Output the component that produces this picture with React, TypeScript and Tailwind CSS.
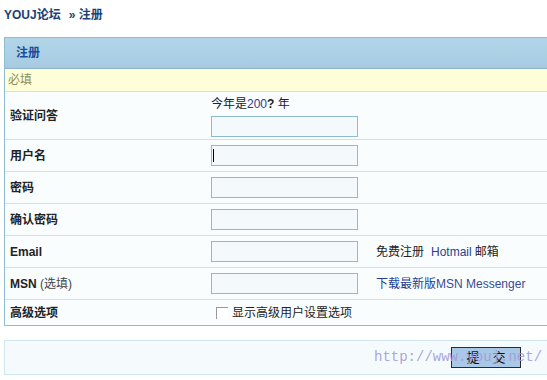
import React from "react"

const font = { fontFamily: '"Liberation Sans", "Noto Sans CJK SC", sans-serif' }

function Field({ caret = false }: { caret?: boolean }) {
  return (
    <div className="relative h-[21px] w-[147px] border border-[#8ebccd] bg-[#f4fafb]">
      {caret && <span className="absolute left-[1px] top-[3px] h-[13px] w-px bg-black" />}
    </div>
  )
}

function Row({
  label,
  children,
  className = "h-[32px]",
}: {
  label: React.ReactNode
  children: React.ReactNode
  className?: string
}) {
  return (
    <div className={`grid grid-cols-[202px_1fr] border-b border-[#c8e3ee] ${className}`}>
      <div className="flex items-center pl-[5px] font-bold text-[#222]">{label}</div>
      <div className="flex items-center pl-[4px]">{children}</div>
    </div>
  )
}

export default function App() {
  return (
    <div className="h-[380px] w-[547px] overflow-hidden bg-white pl-[4px] text-[12px] leading-[14px] text-[#222]" style={font}>
      {/* 面包屑 */}
      <div className="flex h-[30px] items-center font-bold text-[#1c3f78]">
        <span>YOUJ论坛</span>
        <span className="ml-[8px]">» 注册</span>
      </div>

      {/* 注册表单 */}
      <div className="mt-[7px] w-[600px] border-l border-t border-b border-[#8fbcd1] bg-[#fafdfe]">
        <div className="flex h-[31px] items-center border-b border-[#8fb3c6] bg-gradient-to-b from-[#b2d5e8] to-[#a6cbe1] pl-[11px] font-bold text-[#184c9c]">
          注册
        </div>
        <div className="flex h-[23px] items-center border-b border-[#e2e2bf] bg-[#fefed8] pl-[3px] text-[#8b8b5a]">
          必填
        </div>

        <Row label="验证问答" className="h-[48px]">
          <div className="flex flex-col gap-[5px] pt-[2px]">
            <span>
              今年是<span className="text-[#2e3a86]">200</span>
              <span className="font-bold">?</span> 年
            </span>
            <Field />
          </div>
        </Row>
        <Row label="用户名">
          <Field caret />
        </Row>
        <Row label="密码">
          <Field />
        </Row>
        <Row label="确认密码">
          <Field />
        </Row>
        <Row label="Email">
          <Field />
          <span className="ml-[18px]">免费注册</span>
          <span className="ml-[7px] text-[#2c3f8c]">Hotmail</span>
          <span className="ml-[3px]">邮箱</span>
        </Row>
        <Row label={<span>MSN <span className="font-normal text-[#444]">(选填)</span></span>}>
          <Field />
          <span className="ml-[18px] text-[#23408e]">下载最新版</span>
          <span className="text-[#3b4a92]">MSN Messenger</span>
        </Row>
        <Row label="高级选项" className="h-[25px] border-b-0">
          <div className="ml-[5px] flex items-center gap-[4px]">
            <span className="h-[12px] w-[12px] border-l border-t border-[#999] bg-white" />
            <span>显示高级用户设置选项</span>
          </div>
        </Row>
      </div>

      {/* 提交 */}
      <div className="relative mt-[14px] flex h-[35px] w-[600px] items-center border-y border-l border-[#d2e6f0] bg-[#f5fafd] pl-[446px]">
        <button className="h-[21px] w-[70px] border border-[#2b2b2b] bg-[#a9c7e6] text-[13px] text-[#111]">
          提　交
        </button>
        <span
          className="pointer-events-none absolute left-[369px] top-[9px] text-[14px] text-[#a19ad9]/90"
          style={{ fontFamily: '"Liberation Mono", monospace' }}
        >
          http://www.youj.net/
        </span>
      </div>
    </div>
  )
}
